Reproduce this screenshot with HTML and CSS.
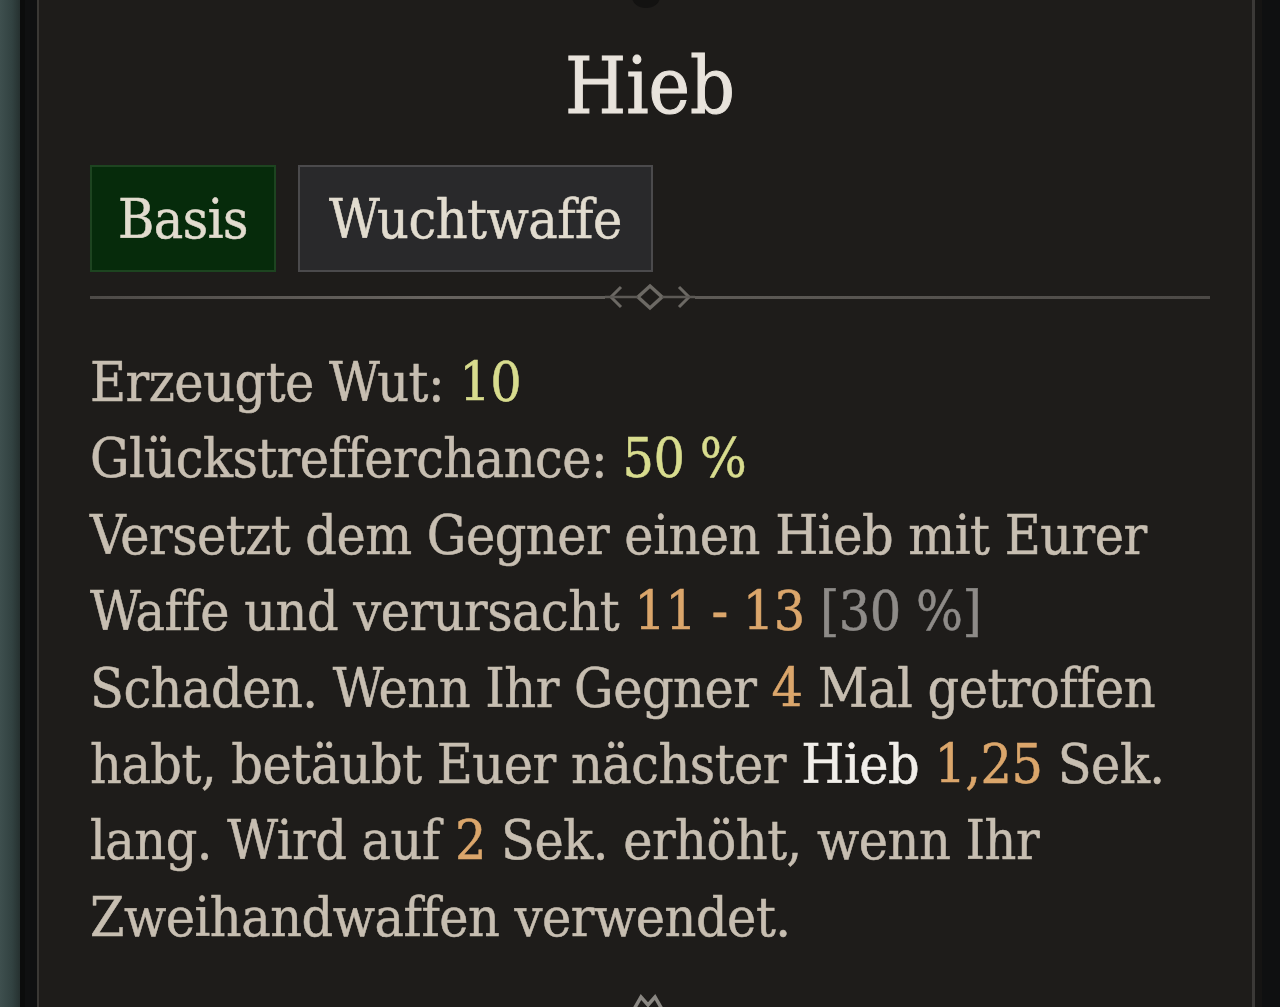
FILE: index.html
```html
<!DOCTYPE html>
<html>
<head>
    <title>Hieb</title>
    <link rel="stylesheet" href="styles.css">
</head>
<body>
    <div class="frame">
        <div class="edge-left"></div>
        <div class="panel">
            <div class="top-knob"></div>
            <h1 class="title">Hieb</h1>

            <div class="tabs">
                <div class="tab tab-active">Basis</div>
                <div class="tab">Wuchtwaffe</div>
            </div>

            <div class="divider">
                <svg class="divider-ornament" width="90" height="28" viewBox="0 0 90 28">
                    <path d="M16 4 L6 14 L16 24" fill="none" stroke="#6c6964" stroke-width="3"/>
                    <path d="M74 4 L84 14 L74 24" fill="none" stroke="#6c6964" stroke-width="3"/>
                    <path d="M45 3 L57 14 L45 25 L33 14 Z" fill="none" stroke="#6c6964" stroke-width="3.5"/>
                    <path d="M0 14 H33 M57 14 H90" stroke="#5c5955" stroke-width="2.5"/>
                </svg>
            </div>

            <div class="desc">
                <p>Erzeugte Wut: <span class="val-green">10</span></p>
                <p>Glückstrefferchance: <span class="val-green">50 %</span></p>
                <p>Versetzt dem Gegner einen Hieb mit Eurer<br>
                Waffe und verursacht <span class="val-orange">11 - 13</span> <span class="val-grey">[30 %]</span><br>
                Schaden. Wenn Ihr Gegner <span class="val-orange">4</span> Mal getroffen<br>
                habt, betäubt Euer nächster <span class="val-white">Hieb</span> <span class="val-orange">1,25</span> Sek.<br>
                lang. Wird auf <span class="val-orange">2</span> Sek. erhöht, wenn Ihr<br>
                Zweihandwaffen verwendet.</p>
            </div>

            <svg class="bottom-ornament" width="40" height="20" viewBox="0 0 40 20">
                <path d="M5 20 L13 6 L20 14 L27 6 L35 20" fill="none" stroke="#8a8782" stroke-width="3.5"/>
            </svg>
        </div>
        <div class="edge-right"></div>
    </div>
</body>
</html>
```

FILE: styles.css
```css
body {
    margin: 0;
    background-color: #0f1011;
    font-family: "DejaVu Serif", "Liberation Serif", serif;
    font-stretch: condensed;
    overflow: hidden;
}
.frame {
    display: flex;
    height: 1007px;
}
.edge-left {
    width: 20px;
    background: linear-gradient(90deg, #3e4f4e, #324241 60%, #263130);
    border-right: 5px solid #0b0c0c;
    margin-right: 12px;
    flex-shrink: 0;
}
.edge-right {
    width: 18px;
    background-color: #0f1011;
    border-left: 7px solid #151413;
    flex-shrink: 0;
}
.panel {
    position: relative;
    flex: 1;
    background-color: #1e1c1a;
    border-left: 2px solid #3a3835;
    border-right: 3px solid #3b3937;
    padding: 0 42px 0 51px;
    overflow: hidden;
}
.top-knob {
    position: absolute;
    left: 50%;
    top: -14px;
    width: 28px;
    height: 22px;
    margin-left: -14px;
    border-radius: 50%;
    background-color: #131211;
}
.title {
    margin: 41px 0 0;
    text-align: center;
    font-size: 78px;
    font-weight: normal;
    line-height: 90px;
    color: #e8e3dc;
    -webkit-text-stroke: 1px #e8e3dc;
}
.tabs {
    display: flex;
    gap: 22px;
    margin-top: 34px;
}
.tab {
    height: 103px;
    padding: 0 29px;
    display: flex;
    align-items: center;
    font-size: 55px;
    letter-spacing: -0.5px;
    color: #e2dccf;
    -webkit-text-stroke: 0.5px #e2dccf;
    background-color: #29292b;
    border: 2px solid #4b4a4c;
}
.tab-active {
    padding: 0 26px;
    background-color: #062b0b;
    border-color: #1d4420;
}
.divider {
    position: relative;
    margin-top: 24px;
    height: 3px;
    background: linear-gradient(90deg, #4d4a47, #67635f 30%, #5b5854 60%, #4c4946);
}
.divider-ornament {
    position: absolute;
    left: 50%;
    top: -13px;
    margin-left: -45px;
    background-color: #1e1c1a;
}
.desc {
    margin-top: 45px;
    font-size: 55px;
    letter-spacing: -0.5px;
    line-height: 76.4px;
    color: #c7beb1;
    -webkit-text-stroke: 0.5px currentColor;
    white-space: nowrap;
}
.desc p {
    margin: 0;
}
.val-green {
    color: #d8dc8e;
}
.val-orange {
    color: #dba66b;
}
.val-grey {
    color: #8e8b88;
}
.val-white {
    color: #f1eee9;
}
.bottom-ornament {
    position: absolute;
    left: 50%;
    bottom: -4px;
    margin-left: -18px;
}
```
